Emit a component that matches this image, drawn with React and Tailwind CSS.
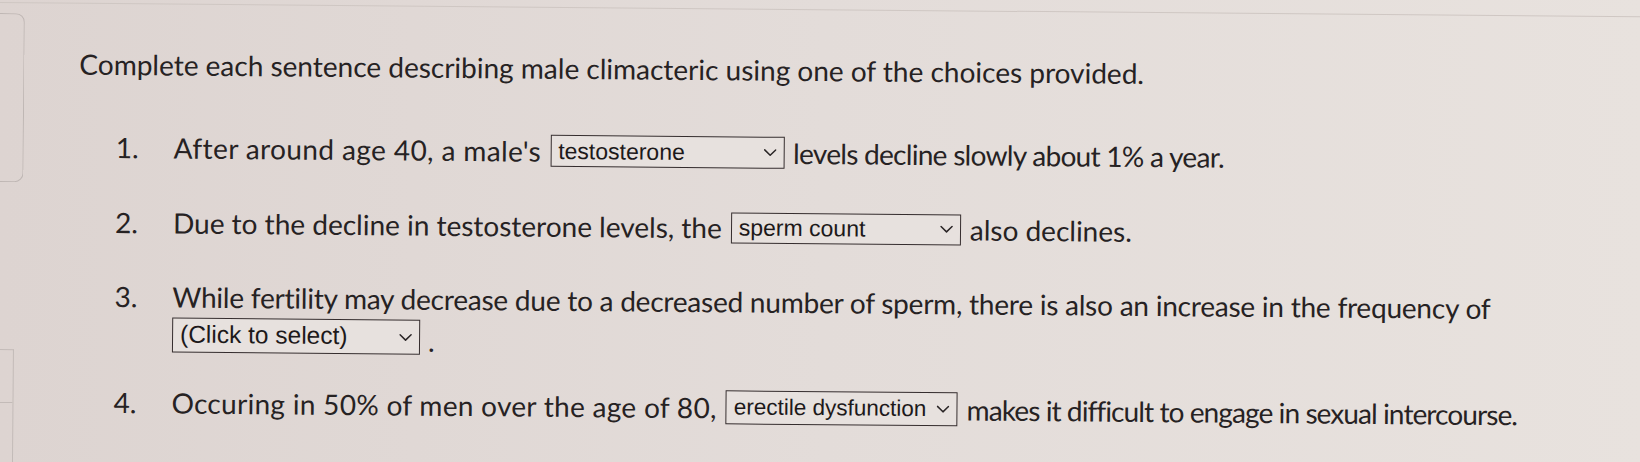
import React from "react";

function Chevron() {
  return (
    <svg width="13" height="8" viewBox="0 0 13 8" className="shrink-0">
      <path d="M1 1.2 L6.5 6.6 L12 1.2" fill="none" stroke="#2a2526" strokeWidth="1.5" strokeLinecap="round" strokeLinejoin="round" />
    </svg>
  );
}

function Select({ value, width, height, size }) {
  return (
    <div
      className={`flex items-center justify-between gap-[6px] border-[1.5px] border-[#352d2e] bg-[#e7e1de] pl-[7px] pr-[7px] text-[#1d191a] ${width} ${height} ${size}`}
      style={{ fontFamily: '"Liberation Sans", Arial, sans-serif' }}
    >
      <span className="leading-none whitespace-nowrap">{value}</span>
      <Chevron />
    </div>
  );
}

export default function App() {
  return (
    <div className="relative w-[1640px] h-[462px] overflow-hidden bg-linear-to-r from-[#ddd4d1] via-[#e3dcd9] to-[#e8e2de]">
      <div className="origin-top-left rotate-[0.5deg] w-[1700px] h-[520px] flex">
        {/* left edge decorations */}
        <div className="w-[25px] shrink-0 flex flex-col">
          <div className="h-[3px]" />
          <div className="mt-[10px] h-[169px] w-[25px] rounded-r-[9px] border-[1.5px] border-l-0 border-[#bfb7b4]" />
          <div className="mt-[167px] h-[120px] w-[17px] border-[1.5px] border-l-0 border-[#c3bbb8] flex flex-col">
            <div className="h-[53px] border-b-[1.5px] border-[#c3bbb8]" />
          </div>
        </div>
        <div className="flex-1 flex flex-col relative">
          <div className="h-[3px] border-b border-[#cfc7c3] -ml-[25px]" />
          <div
            className="ml-[55px] text-[#262223] text-[28px]"
            style={{ fontFamily: 'Lato, "Open Sans", sans-serif' }}
          >
            <div className="mt-[43px] h-[34px] leading-[34px] whitespace-nowrap">
              Complete each sentence describing male climacteric using one of the choices provided.
            </div>

            {/* Row 1 */}
            <div className="mt-[49px] flex items-center h-[34px]">
              <div className="w-[60px] text-right leading-[34px]">1.</div>
              <div className="ml-[35px] flex items-center gap-[9px] whitespace-nowrap leading-[34px]">
                <span className="tracking-[0.4px]">After around age 40, a male's</span>
                <Select value="testosterone" width="w-[234px]" height="h-[32px]" size="text-[23px]" />
                <span className="tracking-[-0.7px]">levels decline slowly about 1% a year.</span>
              </div>
            </div>

            {/* Row 2 */}
            <div className="mt-[41px] flex items-center h-[34px]">
              <div className="w-[60px] text-right leading-[34px]">2.</div>
              <div className="ml-[35px] flex items-center gap-[9px] whitespace-nowrap leading-[34px]">
                <span>Due to the decline in testosterone levels, the</span>
                <Select value="sperm count" width="w-[230px]" height="h-[31px]" size="text-[23px]" />
                <span>also declines.</span>
              </div>
            </div>

            {/* Row 3 */}
            <div className="mt-[40px] flex">
              <div className="w-[60px] text-right h-[34px] leading-[34px]">3.</div>
              <div className="ml-[35px] flex flex-col whitespace-nowrap">
                <div className="h-[34px] leading-[34px] tracking-[-0.22px]">
                  While fertility may decrease due to a decreased number of sperm, there is also an increase in the frequency of
                </div>
                <div className="mt-[4px] flex items-center gap-[8px]">
                  <Select value="(Click to select)" width="w-[248px]" height="h-[35px]" size="text-[24.5px]" />
                  <span className="leading-none pt-[6px]">.</span>
                </div>
              </div>
            </div>

            {/* Row 4 */}
            <div className="mt-[33px] flex items-center h-[34px]">
              <div className="w-[60px] text-right leading-[34px]">4.</div>
              <div className="ml-[35px] flex items-center gap-[9px] whitespace-nowrap leading-[34px]">
                <span className="tracking-[0.3px]">Occuring in 50% of men over the age of 80,</span>
                <Select value="erectile dysfunction" width="w-[232px]" height="h-[34px]" size="text-[22.5px]" />
                <span className="tracking-[-0.9px]">makes it difficult to engage in sexual intercourse.</span>
              </div>
            </div>
          </div>
        </div>
      </div>
    </div>
  );
}
